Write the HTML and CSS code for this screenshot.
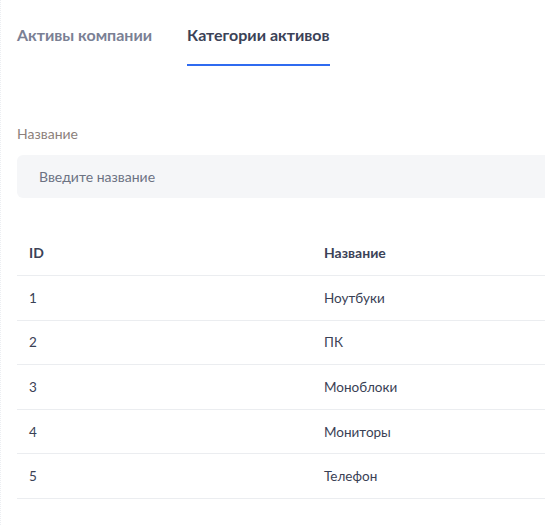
FILE: index.html
```html
<!DOCTYPE html>
<html lang="ru">
<head>
    <meta charset="UTF-8">
    <meta name="viewport" content="width=device-width, initial-scale=1.0">
    <title>Категории активов</title>
    <link rel="stylesheet" href="styles.css">
</head>
<body>
    <div class="page">
        <nav class="tabs">
            <a class="tab" href="#">Активы компании</a>
            <a class="tab active" href="#">Категории активов</a>
        </nav>

        <div class="filter">
            <label class="filter-label" for="name">Название</label>
            <input class="filter-input" id="name" type="text" placeholder="Введите название">
        </div>

        <table class="grid">
            <thead>
                <tr>
                    <th class="col-id">ID</th>
                    <th>Название</th>
                </tr>
            </thead>
            <tbody>
                <tr><td>1</td><td>Ноутбуки</td></tr>
                <tr><td>2</td><td>ПК</td></tr>
                <tr><td>3</td><td>Моноблоки</td></tr>
                <tr><td>4</td><td>Мониторы</td></tr>
                <tr><td>5</td><td>Телефон</td></tr>
            </tbody>
        </table>
    </div>
</body>
</html>
```

FILE: styles.css
```css
html, body {
    height: 100%;
}
body {
    margin: 0;
    font-family: Lato, "Noto Sans", sans-serif;
    color: #3a4155;
    background: #fff;
    overflow: hidden;
    border-left: 1px dotted #eceef2;
}
.page {
    padding-left: 16px;
    overflow: hidden;
}
.tabs {
    display: flex;
    gap: 35px;
    padding-top: 25px;
}
.tab {
    font-size: 16px;
    font-weight: 700;
    color: #7a8094;
    text-decoration: none;
    padding-bottom: 20px;
    border-bottom: 2px solid transparent;
}
.tab.active {
    color: #3b4257;
    border-bottom-color: #2f6bf0;
}
.filter {
    margin-top: 59px;
}
.filter-label {
    display: block;
    font-size: 14px;
    color: #8c7f7b;
    margin-bottom: 13px;
}
.filter-input {
    display: block;
    box-sizing: border-box;
    width: calc(100% + 20px);
    height: 43px;
    border: none;
    border-radius: 6px;
    background: #f5f6f8;
    padding: 0 22px;
    font-family: inherit;
    font-size: 14px;
    color: #3a4155;
    outline: none;
}
.filter-input::placeholder {
    color: #6c7283;
}
.grid {
    margin-top: 31px;
    width: calc(100% + 20px);
    border-collapse: collapse;
    font-size: 13.5px;
}
.grid th,
.grid td {
    text-align: left;
    padding: 0 12px;
    height: 43.6px;
    border-bottom: 1px solid #ebedf0;
}
.grid th {
    font-size: 14px;
    font-weight: 700;
    color: #3b4257;
    height: 46px;
}
.grid .col-id {
    width: 271px;
}
```
